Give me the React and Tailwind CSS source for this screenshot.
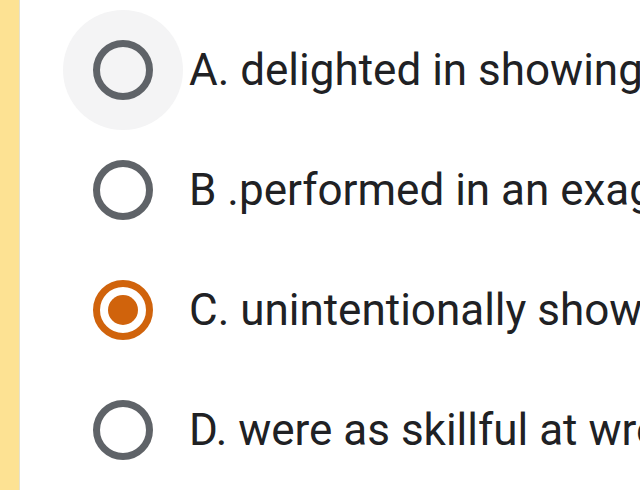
const options = [
  { id: "a", label: "A. delighted in showing off their skills" },
  { id: "b", label: "B .performed in an exaggerated manner" },
  { id: "c", label: "C. unintentionally showed their feelings" },
  { id: "d", label: "D. were as skillful at wrestling as others" },
];

function Radio({ checked }) {
  if (checked) {
    return (
      <div className="w-[60px] h-[60px] rounded-full border-[7px] border-[#d0630c] flex items-center justify-center">
        <div className="w-[30px] h-[30px] rounded-full bg-[#d0630c]" />
      </div>
    );
  }

  return (
    <div className="w-[60px] h-[60px] rounded-full border-[7px] border-[#5f6368]" />
  );
}

export default function App() {
  const selected = "c";
  const hovered = "a";

  return (
    <div className="flex w-[640px] h-[490px] overflow-hidden bg-white font-['Roboto',sans-serif]">
      <div className="w-[20px] shrink-0 bg-[#fde293] border-r border-[#e6e2cf]" />

      <div className="flex-1 flex flex-col pt-[10px] pl-[43px] overflow-hidden">
        {options.map((option) => (
          <div key={option.id} className="flex items-center h-[120px] gap-[6px]">
            <div
              className={`w-[120px] h-[120px] shrink-0 rounded-full flex items-center justify-center ${
                option.id === hovered ? "bg-[#f4f4f5]" : ""
              }`}
            >
              <Radio checked={option.id === selected} />
            </div>

            <div className="text-[44px] leading-none text-[#202124] whitespace-nowrap">
              {option.label}
            </div>
          </div>
        ))}
      </div>
    </div>
  );
}
